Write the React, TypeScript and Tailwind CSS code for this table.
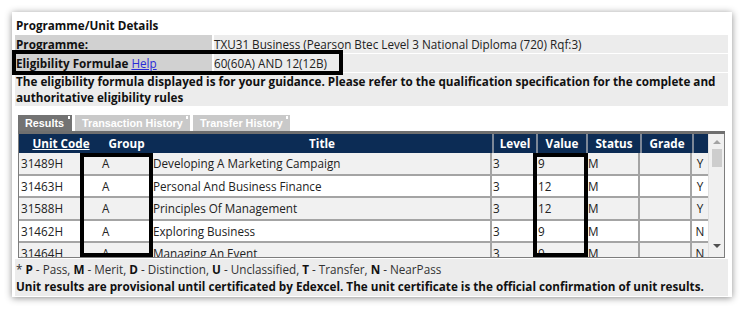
import React from 'react';

const rows: string[][] = [
  ['31489H', 'A', 'Developing A Marketing Campaign', '3', '9', 'M', '', 'Y'],
  ['31463H', 'A', 'Personal And Business Finance', '3', '12', 'M', '', 'Y'],
  ['31588H', 'A', 'Principles Of Management', '3', '12', 'M', '', 'Y'],
  ['31462H', 'A', 'Exploring Business', '3', '9', 'M', '', 'N'],
  ['31464H', 'A', 'Managing An Event', '3', '9', 'M', '', 'N'],
];

function Tab({ label, active, w }: { label: string; active?: boolean; w: string }) {
  return (
    <div
      className={`relative h-[16px] ${w} flex items-center pl-[7px] font-['Liberation_Sans',sans-serif] font-bold text-[10.8px] text-white ${
        active ? 'bg-[#737373]' : 'bg-[#c9c9c9]'
      }`}
    >
      {label}
      <span className="absolute top-[1px] right-[2px] w-[2px] h-[3px] bg-white" />
    </div>
  );
}

export default function App() {
  return (
    <div className="w-[750px] h-[316px] bg-white pt-[12px] pl-[12px] font-['Open_Sans',sans-serif] text-[11.7px] text-[#222]">
      <div className="relative w-[720px] h-[285px] bg-white shadow-[0_1px_7px_rgba(0,0,0,0.45)] pl-[3px] pr-[4px] pt-[4px]">
        {/* Title */}
        <div className="h-[18px] leading-[18px] pl-[1px] font-bold text-[#111]">Programme/Unit Details</div>

        {/* Info rows */}
        <div className="mt-[1px] flex flex-col gap-[1px]">
          <div className="flex gap-[2px] h-[18px]">
            <div className="w-[197px] bg-[#d1d1d1] pl-[1px] leading-[18px] font-bold text-[#111]">Programme:</div>
            <div className="flex-1 bg-[#ececec] leading-[18px]">TXU31 Business (Pearson Btec Level 3 National Diploma (720) Rqf:3)</div>
          </div>
          <div className="flex gap-[2px] h-[18px]">
            <div className="w-[197px] bg-[#d1d1d1] pl-[1px] leading-[18px] font-bold text-[#111]">
              Eligibility Formulae <span className="font-normal text-[#2a2ad8] underline">Help</span>
            </div>
            <div className="flex-1 bg-[#ececec] leading-[18px]">60(60A) AND 12(12B)</div>
          </div>
        </div>

        {/* Guidance paragraph */}
        <div className="mt-[1px] h-[33px] bg-[#ececec] pl-[1px] pt-[1px] font-bold text-[#111] leading-[15.5px]">
          The eligibility formula displayed is for your guidance. Please refer to the qualification specification for the complete and
          authoritative eligibility rules
        </div>

        {/* Tabs */}
        <div className="mt-[9px] ml-[3px] flex gap-[3px]">
          <Tab label="Results" active w="w-[54px]" />
          <Tab label="Transaction History" w="w-[115px]" />
          <Tab label="Transfer History" w="w-[97px]" />
        </div>
        <div className="ml-[3px] w-[707px] h-[3px] bg-[#6f6f6f]" />

        {/* Results grid */}
        <div className="ml-[3px] w-[707px] flex border-x border-b border-[#7d7d7d]">
          <div className="w-[689px]">
            {/* header */}
            <div className="flex h-[19px] bg-[#0c2c55] text-white font-bold leading-[19px]">
              <div className="w-[82px] text-center pl-[2px]"><span className="underline">Unit Code</span></div>
              <div className="w-[51px] text-center">Group</div>
              <div className="w-[340px] text-center">Title</div>
              <div className="w-[44px] text-center border-l-2 border-[#7c8797]">Level</div>
              <div className="w-[50px] text-center border-l-2 border-[#7c8797]">Value</div>
              <div className="w-[54px] text-center border-l-2 border-[#7c8797]">Status</div>
              <div className="w-[52px] text-center border-l-2 border-[#7c8797]">Grade</div>
              <div className="w-[16px] border-l-2 border-[#7c8797]" />
            </div>
            {/* body */}
            <div className="relative h-[104px] overflow-hidden">
              {rows.map((r, i) => (
                <div
                  key={i}
                  className={`flex h-[22.5px] leading-[21px] border-b-2 border-[#a4a4a4] ${i % 2 === 0 ? 'bg-[#f1f1f1]' : 'bg-white'}`}
                >
                  <div className="w-[63px] pl-[2px] border-r-2 border-[#a4a4a4]">{r[0]}</div>
                  <div className="w-[70px] pl-[20px] border-r-2 border-[#a4a4a4]">{r[1]}</div>
                  <div className="w-[340px] pl-[1px] border-r-2 border-[#a4a4a4]">{r[2]}</div>
                  <div className="w-[44px] pl-[1px] border-r-2 border-[#a4a4a4]">{r[3]}</div>
                  <div className="w-[50px] pl-[2px] border-r-2 border-[#a4a4a4]">{r[4]}</div>
                  <div className="w-[54px] pl-[2px] border-r-2 border-[#a4a4a4]">{r[5]}</div>
                  <div className="w-[52px] border-r-2 border-[#a4a4a4]">{r[6]}</div>
                  <div className="w-[16px] text-center">{r[7]}</div>
                </div>
              ))}
              {/* annotation boxes */}
              <div className="absolute left-[61px] top-0 w-[73px] h-[104px] border-[4px] border-black" />
              <div className="absolute left-[514px] top-0 w-[55px] h-[104px] border-[4px] border-black" />
            </div>
          </div>
          {/* scrollbar */}
          <div className="relative w-[16px] bg-[#f0f0f0] border-l border-[#e0e0e0]">
            <div className="absolute top-[6px] left-[4px] w-0 h-0 border-x-[4px] border-x-transparent border-b-[4px] border-b-[#a3a3a3]" />
            <div className="absolute top-[15px] left-[3px] w-[10px] h-[18px] bg-[#cdcdcd]" />
            <div className="absolute bottom-[9px] left-[4px] w-0 h-0 border-x-[4px] border-x-transparent border-t-[4px] border-t-[#505050]" />
          </div>
        </div>

        {/* Footer */}
        <div className="mt-[1px] h-[37px] bg-[#ececec] pl-[1px] pt-[2px] leading-[17px]">
          <div className="text-[#333]">
            * <b className="text-[#111]">P</b> - Pass, <b className="text-[#111]">M</b> - Merit, <b className="text-[#111]">D</b> - Distinction,{' '}
            <b className="text-[#111]">U</b> - Unclassified, <b className="text-[#111]">T</b> - Transfer, <b className="text-[#111]">N</b> - NearPass
          </div>
          <div className="font-bold text-[#111]">
            Unit results are provisional until certificated by Edexcel. The unit certificate is the official confirmation of unit results.
          </div>
        </div>

        {/* annotation box around eligibility row */}
        <div className="absolute left-0 top-[38px] w-[331px] h-[25px] border-[4px] border-black" />
      </div>
    </div>
  );
}
